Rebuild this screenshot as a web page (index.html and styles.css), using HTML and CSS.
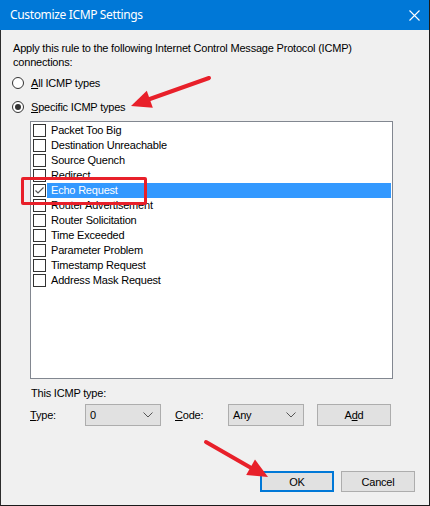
FILE: index.html
```html
<!DOCTYPE html>
<html>
<head>
<meta charset="utf-8">
<link rel="stylesheet" href="styles.css">
</head>
<body>
<div class="window">
  <div class="titlebar">
    <span class="title">Customize ICMP Settings</span>
    <svg class="close" width="11" height="11" viewBox="0 0 11 11"><path d="M0.5 0.5 L10.5 10.5 M10.5 0.5 L0.5 10.5" stroke="#fff" stroke-width="1.1" fill="none"/></svg>
  </div>
  <div class="content">
    <p class="desc">Apply this rule to the following Internet Control Message Protocol (ICMP) connections:</p>
    <div class="radio-row"><span class="radio"></span><span><u>A</u>ll ICMP types</span></div>
    <div class="radio-row second"><span class="radio checked"></span><span><u>S</u>pecific ICMP types</span></div>
    <div class="listbox">
      <div class="item"><span class="cb"></span><span class="label">Packet Too Big</span></div>
      <div class="item"><span class="cb"></span><span class="label">Destination Unreachable</span></div>
      <div class="item"><span class="cb"></span><span class="label">Source Quench</span></div>
      <div class="item"><span class="cb"></span><span class="label">Redirect</span></div>
      <div class="item selected"><span class="cb checked"><svg width="11" height="11" viewBox="0 0 11 11"><path d="M1.5 5.5 L4 8 L9.5 2.5" stroke="#555" stroke-width="1.2" fill="none"/></svg></span><span class="label">Echo Request</span></div>
      <div class="item"><span class="cb"></span><span class="label">Router Advertisement</span></div>
      <div class="item"><span class="cb"></span><span class="label">Router Solicitation</span></div>
      <div class="item"><span class="cb"></span><span class="label">Time Exceeded</span></div>
      <div class="item"><span class="cb"></span><span class="label">Parameter Problem</span></div>
      <div class="item"><span class="cb"></span><span class="label">Timestamp Request</span></div>
      <div class="item"><span class="cb"></span><span class="label">Address Mask Request</span></div>
    </div>
    <div class="type-caption">This ICMP type:</div>
    <div class="type-row">
      <span class="field-label"><u>T</u>ype:</span>
      <div class="combo"><span>0</span><svg width="10" height="6" viewBox="0 0 10 6"><path d="M0.5 0.5 L5 5 L9.5 0.5" stroke="#555" stroke-width="1" fill="none"/></svg></div>
      <span class="field-label code"><u>C</u>ode:</span>
      <div class="combo"><span>Any</span><svg width="10" height="6" viewBox="0 0 10 6"><path d="M0.5 0.5 L5 5 L9.5 0.5" stroke="#555" stroke-width="1" fill="none"/></svg></div>
      <div class="btn add">A<u>d</u>d</div>
    </div>
    <div class="footer">
      <div class="btn ok">OK</div>
      <div class="btn cancel">Cancel</div>
    </div>
  </div>
  <div class="highlight-box"></div>
  <svg class="annot" width="430" height="506" viewBox="0 0 430 506">
    <line x1="208" y1="78" x2="146" y2="100" stroke="#e8202a" stroke-width="4" stroke-linecap="round"/>
    <polygon points="130,106 145.8,90.7 151.8,107.7" fill="#e8202a"/>
    <line x1="205" y1="442" x2="252" y2="469" stroke="#e8202a" stroke-width="4" stroke-linecap="round"/>
    <polygon points="267,477 245.2,475 254,459.4" fill="#e8202a"/>
  </svg>
</div>
</body>
</html>
```

FILE: styles.css
```css
html, body {
  margin: 0;
  padding: 0;
}
body {
  width: 430px;
  height: 506px;
  overflow: hidden;
  font-family: "Liberation Sans", Arial, sans-serif;
  font-size: 11px;
  letter-spacing: -0.2px;
  color: #000;
}
.window {
  position: relative;
  width: 430px;
  height: 506px;
  box-sizing: border-box;
  border-left: 1px solid #2c2c2c;
  border-right: 1px solid #1a1a1a;
  border-bottom: 1px solid #1a1a1a;
  background: #f0f0f0;
  display: flex;
  flex-direction: column;
}
.titlebar {
  height: 30px;
  background: #0078d7;
  display: flex;
  align-items: center;
  justify-content: space-between;
  padding: 0 9px 0 10px;
  box-sizing: border-box;
  margin-left: -1px;
}
.title {
  color: #fff;
  font-family: "Noto Sans", "Open Sans", sans-serif;
  font-size: 12px;
  letter-spacing: -0.35px;
  padding-bottom: 1px;
}
.close {
  display: block;
}
.content {
  padding: 11px 0 0 11px;
  display: flex;
  flex-direction: column;
}
.desc {
  margin: 0 0 0 1px;
  line-height: 14px;
  width: 360px;
}
.radio-row {
  display: flex;
  align-items: center;
  height: 14px;
  margin-top: 7px;
}
.radio-row.second {
  margin-top: 10px;
}
.radio {
  width: 10px;
  height: 10px;
  border: 1px solid #333;
  border-radius: 50%;
  background: #fff;
  margin-right: 7px;
  position: relative;
  flex: none;
}
.radio.checked::after {
  content: "";
  position: absolute;
  left: 2px;
  top: 2px;
  width: 6px;
  height: 6px;
  border-radius: 50%;
  background: #333;
}
.listbox {
  margin-top: 7px;
  margin-left: 18px;
  width: 363px;
  height: 258px;
  box-sizing: border-box;
  border: 1px solid #828790;
  background: #fff;
  padding: 1px 1px 0 2px;
}
.item {
  height: 15px;
  display: flex;
  align-items: center;
}
.cb {
  width: 11px;
  height: 11px;
  border: 1px solid #333;
  background: #fff;
  flex: none;
  display: flex;
  align-items: center;
  justify-content: center;
}
.cb svg {
  display: block;
}
.label {
  flex: 1;
  height: 15px;
  line-height: 15px;
  margin-left: 1px;
  padding-left: 4px;
}
.item.selected .label {
  background: #3399ff;
  color: #fff;
}
.type-caption {
  margin-top: 8px;
  margin-left: 19px;
  line-height: 13px;
}
.type-row {
  margin-top: 4px;
  margin-left: 18px;
  display: flex;
  align-items: center;
  height: 22px;
}
.field-label {
  width: 55px;
  flex: none;
}
.field-label.code {
  margin-left: 14px;
  width: 53px;
}
.combo {
  width: 76px;
  height: 22px;
  box-sizing: border-box;
  border: 1px solid #adadad;
  background: #e1e1e1;
  display: flex;
  align-items: center;
  justify-content: space-between;
  padding: 0 7px 0 4px;
  flex: none;
}
.combo svg {
  display: block;
}
.btn {
  height: 21px;
  width: 74px;
  box-sizing: border-box;
  border: 1px solid #adadad;
  background: #e1e1e1;
  display: flex;
  align-items: center;
  justify-content: center;
  flex: none;
}
.add {
  margin-left: 13px;
  height: 22px;
}
.footer {
  margin-top: 45px;
  display: flex;
  justify-content: flex-end;
  gap: 7px;
  padding-right: 14px;
}
.ok {
  border: 2px solid #0078d7;
}
.highlight-box {
  position: absolute;
  left: 20px;
  top: 177px;
  width: 126px;
  height: 28px;
  box-sizing: border-box;
  border: 3px solid #e8202a;
  border-radius: 2px;
}
.annot {
  position: absolute;
  left: 0;
  top: 0;
  pointer-events: none;
}
```
